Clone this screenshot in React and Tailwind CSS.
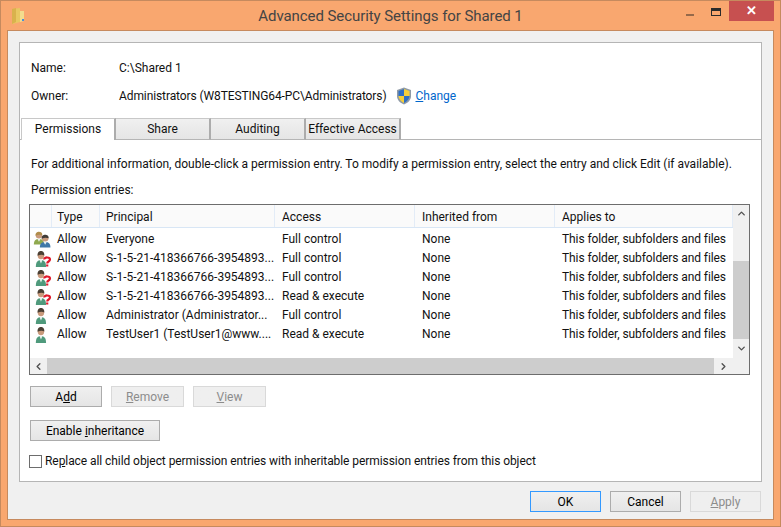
import { ChevronUp, ChevronDown, ChevronLeft, ChevronRight } from "lucide-react";

const rows = [
  { icon: "group", principal: "Everyone", access: "Full control" },
  { icon: "unknown", principal: "S-1-5-21-418366766-3954893...", access: "Full control" },
  { icon: "unknown", principal: "S-1-5-21-418366766-3954893...", access: "Full control" },
  { icon: "unknown", principal: "S-1-5-21-418366766-3954893...", access: "Read & execute" },
  { icon: "user", principal: "Administrator (Administrator...", access: "Full control" },
  { icon: "user", principal: "TestUser1 (TestUser1@www....", access: "Read & execute" },
];

function FolderIcon() {
  return (
    <svg width="14" height="18" viewBox="0 0 14 18">
      <path d="M1 2 L9 1 L9 15 L1 17 Z" fill="#e8c862" />
      <path d="M1 2 L5 1 L5 15 L1 17 Z" fill="#d9b24c" />
      <path d="M9 4 L13 4 L13 14 L9 15 Z" fill="#f3dd8e" />
      <rect x="11" y="12" width="2" height="2" fill="#4a90d9" />
    </svg>
  );
}

function ShieldIcon() {
  return (
    <svg width="16" height="18" viewBox="0 0 16 18">
      <path d="M8 .5 L15 3 V9 C15 13 12 16 8 17.5 C4 16 1 13 1 9 V3 Z" fill="#8f9aa6" />
      <path d="M8 2 V9 H2.5 V4 Z" fill="#2f6fc4" />
      <path d="M8 2 L13.5 4 V9 H8 Z" fill="#f5cf3a" />
      <path d="M8 9 H2.5 C2.8 12 5 14.6 8 16 Z" fill="#f5cf3a" />
      <path d="M8 9 H13.5 C13.2 12 11 14.6 8 16 Z" fill="#2f6fc4" />
    </svg>
  );
}

function PersonShape({ shirt = "#4f9a7c", hair = "#4b4034" }) {
  return (
    <g>
      <path d="M1 17 C1 12 3 10 7 10 C11 10 13 12 13 17 Z" fill={shirt} />
      <path d="M5.2 10 L7 13.5 L8.8 10 Z" fill="#e9f2ee" />
      <circle cx="7" cy="5.5" r="3.8" fill="#c99a7c" />
      <path d="M3.1 5.8 C2.6 2.4 5 1 7 1 C9 1 11.4 2.4 10.9 5.4 C9 4.6 6 4.4 3.1 5.8 Z" fill={hair} />
    </g>
  );
}

function EntryIcon({ type }) {
  if (type === "group") {
    return (
      <svg width="19" height="17" viewBox="0 0 19 17">
        <g transform="scale(.85 .8)">
          <PersonShape shirt="#8fa94e" hair="#b08d4a" />
        </g>
        <g transform="translate(6 3) scale(.88 .8)">
          <PersonShape shirt="#3f78a8" hair="#3f3a36" />
        </g>
      </svg>
    );
  }
  return (
    <svg width="19" height="17" viewBox="0 0 19 17">
      <g transform="translate(2 0) scale(.85 1)">
        <PersonShape />
      </g>
      {type === "unknown" && (
        <path
          d="M11.2 9.4 C11.2 6.8 17 6.8 17 9.6 C17 11.6 14.2 11.4 14.2 13.4 M14.2 14.4 V16.6"
          fill="none"
          stroke="#e0182a"
          strokeWidth="2.2"
        />
      )}
    </svg>
  );
}

function WinButton({ children, disabled, focused, className = "" }) {
  return (
    <button
      type="button"
      className={`h-[21px] border bg-gradient-to-b text-xs leading-none ${
        disabled
          ? "border-[#d9d9d9] from-[#efefef] to-[#efefef] text-[#8c8c8c]"
          : focused
            ? "border-[#3399ff] from-[#f0f0f0] to-[#e5e5e5] text-black"
            : "border-[#acacac] from-[#f0f0f0] to-[#e5e5e5] text-black"
      } ${className}`}
    >
      {children}
    </button>
  );
}

function Tab({ label, active }) {
  return (
    <div
      className={`flex w-[95px] shrink-0 items-center justify-center border-r-2 border-r-[#acacac] border-t border-t-[#c8c8c8] pb-[1px] ${
        active
          ? "h-[22px] border-l border-l-[#c8c8c8] bg-white"
          : "h-[22px] border-b border-b-[#b5b5b5] bg-gradient-to-b from-[#f0f0f0] to-[#e5e5e5]"
      }`}
    >
      {label}
    </div>
  );
}

const cols = [
  ["Type", "w-[48px] pl-[5px]"],
  ["Principal", "w-[175px] pl-[6px]"],
  ["Access", "w-[140px] pl-[7px]"],
  ["Inherited from", "w-[140px] pl-[7px]"],
  ["Applies to", "w-[178px] pl-[7px]"],
];

export default function App() {
  return (
    <div
      className="flex h-[527px] w-[781px] flex-col overflow-hidden border border-[#c68a5e] bg-[#f9a76f] text-xs text-[#111]"
      style={{ fontFamily: 'Roboto, "Open Sans", sans-serif' }}
    >
      {/* title bar */}
      <div className="flex h-[29px] shrink-0 items-start">
        <div className="flex h-[29px] w-[34px] items-start pl-[10px] pt-[6px]">
          <FolderIcon />
        </div>
        <div className="flex h-[29px] flex-1 items-center justify-center pl-[62px] pt-[3px] text-[15px] tracking-[-0.07px] text-[#444]">
          Advanced Security Settings for Shared 1
        </div>
        <div className="flex h-[14px] w-[26px] items-start justify-center pr-[14px] pt-[13px]">
          <div className="h-[2px] w-[8px] bg-[#96694a]" />
        </div>
        <div className="ml-[1px] mr-[8px] mt-[7px] h-[8px] w-[10px] border border-t-[3px] border-[#2b2b2b]" />
        <div className="mr-[6px] flex h-[20px] w-[45px] items-center justify-center bg-[#c75050] text-[13px] font-bold text-white">
          ✕
        </div>
      </div>

      {/* client area */}
      <div className="mx-[6px] flex h-[490px] flex-col border border-[#c68a5e] bg-[#f0f0f0] px-[11px] pt-[11px]">
        <div className="flex h-[440px] flex-col border border-[#b5b5b5] bg-white">
          <div className="flex h-[75px] shrink-0 flex-col pl-[11px]">
            <div className="mt-[15px] flex h-[20px] items-center">
              <span className="w-[88px]">Name:</span>
              <span>C:\Shared 1</span>
            </div>
            <div className="mt-[8px] flex h-[20px] items-center">
              <span className="w-[88px]">Owner:</span>
              <span className="tracking-[-0.1px]">Administrators (W8TESTING64-PC\Administrators)</span>
              <span className="ml-[10px] flex items-center gap-[2px]">
                <ShieldIcon />
                <span className="ml-[1px] text-[#0066cc]">
                  <u>C</u>hange
                </span>
              </span>
            </div>
          </div>

          {/* tabs */}
          <div className="flex h-[22px] shrink-0 items-start">
            <div className="h-[22px] w-[1px] border-b border-b-[#b5b5b5]" />
            <Tab label="Permissions" active />
            <Tab label="Share" />
            <Tab label="Auditing" />
            <Tab label="Effective Access" />
            <div className="h-[22px] flex-1 border-b border-b-[#b5b5b5]" />
          </div>

          <div className="flex flex-1 flex-col pl-[9px]">
            <p className="ml-[2px] mt-[16px] h-[17px] leading-[17px]">
              For additional information, double-click a permission entry. To modify a permission entry, select the entry and click Edit (if available).
            </p>
            <p className="ml-[2px] mt-[9px] h-[17px] leading-[17px]">Permission entries:</p>

            {/* permission list */}
            <div className="mt-[5px] flex h-[171px] w-[721px] flex-col border border-[#6d6d6d]">
              <div className="flex min-h-0 flex-1">
                <div className="w-[703px]">
                  <div className="flex h-[23px] border-b border-b-[#d8e6f5] bg-[#fafafa]">
                    <div className="w-[22px] border-r border-r-[#e3ecf7]" />
                    {cols.map(([label, w]) => (
                      <div key={label} className={`${w} border-r border-r-[#e3ecf7] leading-[24px]`}>
                        {label}
                      </div>
                    ))}
                  </div>
                  {rows.map((r, i) => (
                    <div key={i} className="flex h-[19px] items-center whitespace-nowrap pt-[3px]">
                      <div className="flex w-[22px] justify-start pl-[3px]">
                        <EntryIcon type={r.icon} />
                      </div>
                      <div className="w-[48px] pl-[5px]">Allow</div>
                      <div className="w-[176px] pl-[6px]">{r.principal}</div>
                      <div className="w-[140px] pl-[6px]">{r.access}</div>
                      <div className="w-[140px] pl-[6px]">None</div>
                      <div className="w-[177px] pl-[6px] tracking-[-0.09px]">This folder, subfolders and files</div>
                    </div>
                  ))}
                </div>
                <div className="flex w-[16px] flex-col bg-[#f0f0f0] text-[#505050]">
                  <div className="flex h-[17px] items-center justify-center">
                    <ChevronUp size={11} strokeWidth={3} />
                  </div>
                  <div className="mt-[39px] h-[78px] bg-[#cdcdcd]" />
                  <div className="flex flex-1 items-center justify-center">
                    <ChevronDown size={11} strokeWidth={3} />
                  </div>
                </div>
              </div>
              <div className="flex h-[16px] shrink-0 items-center bg-[#f0f0f0] text-[#505050]">
                <div className="flex w-[17px] justify-center">
                  <ChevronLeft size={11} strokeWidth={3} />
                </div>
                <div className="h-full w-[667px] bg-[#cdcdcd]" />
                <div className="flex w-[18px] justify-center">
                  <ChevronRight size={11} strokeWidth={3} />
                </div>
              </div>
            </div>

            <div className="ml-[1px] mt-[11px] flex gap-[9px]">
              <WinButton className="w-[72px]">
                A<u>d</u>d
              </WinButton>
              <WinButton disabled className="w-[73px]">
                <u>R</u>emove
              </WinButton>
              <WinButton disabled className="w-[73px]">
                <u>V</u>iew
              </WinButton>
            </div>
            <WinButton className="ml-[1px] mt-[13px] w-[130px]">
              Enable <u>i</u>nheritance
            </WinButton>
            <div className="mt-[12px] flex items-center">
              <div className="h-[13px] w-[13px] border border-[#6d6d6d] bg-white" />
              <span className="ml-[3px] tracking-[-0.07px]">
                Re<u>p</u>lace all child object permission entries with inheritable permission entries from this object
              </span>
            </div>
          </div>
        </div>

        <div className="mt-[9px] flex justify-end gap-[9px] pr-[1px]">
          <WinButton focused className="w-[71px]">
            OK
          </WinButton>
          <WinButton className="w-[71px]">Cancel</WinButton>
          <WinButton disabled className="w-[71px]">
            <u>A</u>pply
          </WinButton>
        </div>
      </div>
    </div>
  );
}
